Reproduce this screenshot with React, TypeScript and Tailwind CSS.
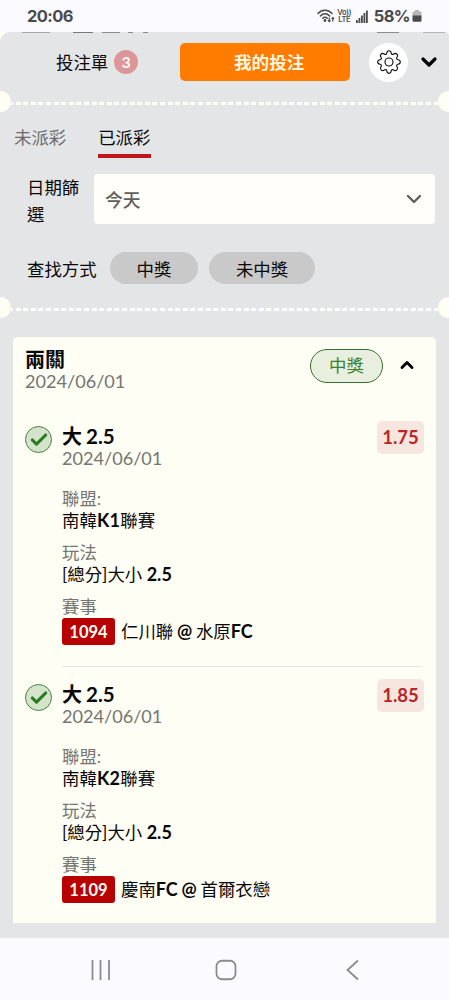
import { Check, ChevronDown, ChevronUp } from 'lucide-react'
import type { ReactNode } from 'react'

interface Leg {
  away: string
  home: string
  league: string
  matchNo: string
  odds: string
}

const legs: Leg[] = [
  { away: '仁川聯', home: '水原FC', league: '南韓K1聯賽', matchNo: '1094', odds: '1.75' },
  { away: '慶南FC', home: '首爾衣戀', league: '南韓K2聯賽', matchNo: '1109', odds: '1.85' },
]

// Latin runs are set bold, Chinese stays at regular weight
function Mixed({ text }: { text: string }) {
  return (
    <>
      {text.split(/([A-Za-z0-9.@]+)/).map((part, i) =>
        i % 2 === 1 ? (
          <span className="text-[18px] font-bold" key={i}>
            {part}
          </span>
        ) : (
          part
        ),
      )}
    </>
  )
}

function StatusBar() {
  return (
    <div className="flex h-8 shrink-0 items-center justify-between bg-[#fbfaff] pl-[27px] pr-[27px] font-['Inter',sans-serif] text-[#4a4a4d]">
      <span className="text-[16.5px] font-bold leading-none tracking-[-0.6px]">20:06</span>
      <div className="flex items-center">
        <svg className="mr-[3px]" fill="none" height="16" viewBox="0 0 18 16" width="18">
          <path d="M1 5.5C5 1.2 11 1.2 15 5.5M3.4 8C6.3 5 9.8 5 12.6 8M5.8 10.3c1.4-1.5 3-1.5 4.4 0" stroke="#4a4a4d" strokeLinecap="round" strokeWidth="1.5" />
          <circle cx="8" cy="12.5" fill="#4a4a4d" r="1.4" />
          <path d="M12.3 9.5v4m-1.3-1.2 1.3 1.3 1.2-1.3M15.8 13.5v-4m-1.2 1.3 1.2-1.3 1.3 1.3" stroke="#4a4a4d" strokeWidth="1.2" />
        </svg>
        <div className="mr-[5px] flex w-[13px] flex-col items-center text-[7.5px] font-semibold leading-[7px] tracking-[-0.3px]">
          <span>Vo))</span>
          <span>LTE</span>
        </div>
        <svg className="mr-[6px]" fill="#4a4a4d" height="13" viewBox="0 0 12 13" width="12">
          <rect height="3" width="1.8" x="0" y="10" />
          <rect height="5" width="1.8" x="2.5" y="8" />
          <rect height="7.5" width="1.8" x="5" y="5.5" />
          <rect height="10" width="1.8" x="7.5" y="3" />
          <rect height="12.5" width="1.8" x="10" y="0.5" />
        </svg>
        <span className="mr-[2px] text-[16.5px] font-bold leading-none tracking-[-0.6px]">58%</span>
        <svg height="14" viewBox="0 0 10 14" width="10">
          <path d="M3 1h4v1.5h1.2A1.3 1.3 0 0 1 9.5 3.8V7H.5V3.8A1.3 1.3 0 0 1 1.8 2.5H3Z" fill="#b5b5b8" />
          <path d="M.5 6.5h9v5A1.3 1.3 0 0 1 8.2 12.8H1.8A1.3 1.3 0 0 1 .5 11.5Z" fill="#4a4a4d" />
        </svg>
      </div>
    </div>
  )
}

function GearIcon() {
  return (
    <svg fill="none" height="26" stroke="#111" strokeLinejoin="round" strokeWidth="1.15" viewBox="0 0 26 26" width="26">
      <path d="M13 1.7 C14.4 1.7 15 2.5 15.2 4 C15.4 5.4 16.6 5.9 17.7 5 C18.9 4.1 19.9 4 20.9 5 C21.9 6 21.9 7.1 21 8.3 C20.1 9.4 20.6 10.6 22 10.8 C23.5 11 24.3 11.6 24.3 13 C24.3 14.4 23.5 15 22 15.2 C20.6 15.4 20.1 16.6 21 17.7 C21.9 18.9 21.9 19.9 20.9 20.9 C19.9 21.9 18.9 21.9 17.7 21 C16.6 20.1 15.4 20.6 15.2 22 C15 23.5 14.4 24.3 13 24.3 C11.6 24.3 11 23.5 10.8 22 C10.6 20.6 9.4 20.1 8.3 21 C7.1 21.9 6.1 21.9 5.1 20.9 C4.1 19.9 4.1 18.9 5 17.7 C5.9 16.6 5.4 15.4 4 15.2 C2.5 15 1.7 14.4 1.7 13 C1.7 11.6 2.5 11 4 10.8 C5.4 10.6 5.9 9.4 5 8.3 C4.1 7.1 4.1 6 5.1 5 C6.1 4 7.1 4.1 8.3 5 C9.4 5.9 10.6 5.4 10.8 4 C11 2.5 11.6 1.7 13 1.7Z" />
      <circle cx="13" cy="13" r="4" />
    </svg>
  )
}

// Ticket style separator: dashes between two half-round notches
function Perforation() {
  return (
    <div className="-mx-[10px] flex h-[21px] shrink-0 items-center">
      <span className="size-[21px] shrink-0 rounded-full bg-[#fffef5]" />
      <span className="mt-[3px] h-[3px] flex-1 bg-[repeating-linear-gradient(90deg,#fffef8_0_2px,transparent_2px_4.6px,#fffef8_4.6px_7.6px)]" />
      <span className="size-[21px] shrink-0 rounded-full bg-[#fffef5]" />
    </div>
  )
}

function Field({ children, label }: { children: ReactNode; label: string }) {
  return (
    <div className="mb-[10px]">
      <p className="h-[22px] leading-[22px] text-[#757571]">{label}</p>
      <div className="flex h-[22px] items-center whitespace-nowrap leading-[22px]">{children}</div>
    </div>
  )
}

function LegRow({ leg }: { leg: Leg }) {
  return (
    <div className="flex h-[258px] shrink-0">
      <span className="mt-[12px] flex size-[27px] shrink-0 items-center justify-center rounded-full border-[1.5px] border-[#467f42] bg-[#d3e4cb]">
        <Check className="text-[#2c7a23]" size={20} strokeWidth={3.8} />
      </span>
      <div className="ml-[10px] min-w-0 flex-1">
        <div className="flex justify-between">
          <div className="pt-[11px]">
            <p className="h-[22px] text-[20px] font-bold leading-[23px]">
              大<span className="ml-[4px] text-[20.5px]">2.5</span>
            </p>
            <p className="h-[22px] text-[18.1px] leading-[22px] text-[#757571]">2024/06/01</p>
          </div>
          <span className="mr-[-2px] mt-[7px] flex h-[33px] w-[47px] items-center justify-center rounded-[5px] bg-[#f7e5df] pt-px text-[18.5px] font-bold text-[#b9262a]">
            {leg.odds}
          </span>
        </div>
        <div className="pt-[19px]">
          <Field label="聯盟:">
            <span className="-mt-[2px] tracking-[0.15px]">
              <Mixed text={leg.league} />
            </span>
          </Field>
          <Field label="玩法">
            <span className="-mt-[2px] whitespace-pre">
              <Mixed text="[總分]大小 2.5" />
            </span>
          </Field>
          <Field label="賽事">
            <span className="mr-[6px] mt-[5px] flex h-[27px] w-[53px] shrink-0 items-center justify-center rounded-[3px] bg-[#b80000] text-[16.5px] font-bold text-[#fffef3]">
              {leg.matchNo}
            </span>
            <span className="mt-[5px] whitespace-pre [word-spacing:-0.7px]">
              <Mixed text={`${leg.away} @ ${leg.home}`} />
            </span>
          </Field>
        </div>
      </div>
    </div>
  )
}

export default function App() {
  return (
    <div className="flex h-[1000px] w-[449px] flex-col overflow-hidden bg-[#fffef5] font-['Lato','Noto_Sans_CJK_TC',sans-serif] text-[17.4px] text-[#080808]">
      <StatusBar />

      <main className="flex h-[906px] shrink-0 flex-col overflow-hidden rounded-tl-[10px] rounded-tr-[4px] bg-[#e4e5e7]">
        {/* Edge of the page behind the bet slip */}
        <div className="flex h-px shrink-0 pl-[22px]">
          <span className="h-px w-[28px] bg-[#a5a6a8]" />
          <span className="ml-[23px] h-px w-[20px] bg-[#77787a]" />
          <span className="ml-[9px] h-px w-[18px] bg-[#8b8c8e]" />
          <span className="ml-[8px] h-px w-[5px] bg-[#8b8c8e]" />
          <span className="ml-[10px] h-px w-[5px] bg-[#8b8c8e]" />
          <span className="ml-[229px] h-px w-[22px] bg-[#8b8c8e]" />
          <span className="ml-[24px] h-px w-[22px] bg-[#b5b6b8]" />
        </div>

        {/* Header */}
        <header className="flex h-[58px] shrink-0 items-center pl-[56px]">
          <span className="mt-[2px]">投注單</span>
          <span className="ml-[6px] flex size-[24px] items-center justify-center rounded-full bg-[#dc9598] text-[16px] font-bold text-[#fff8f2]">
            3
          </span>
          <button className="ml-[42px] h-[38px] w-[170px] rounded-[5px] bg-[#ff7c00] pl-[8px] pt-[2px] text-[17.6px] font-bold text-[#fff6e0]">
            我的投注
          </button>
          <button aria-label="設定" className="ml-[19px] flex size-[39px] items-center justify-center rounded-full bg-white">
            <GearIcon />
          </button>
          <ChevronDown className="ml-[9px] text-black" size={24} strokeWidth={3.2} />
        </header>

        <Perforation />

        {/* Tabs */}
        <nav className="flex h-[46px] shrink-0 gap-[32px] pl-[14px]">
          <span className="h-[46px] pt-[13px] leading-[26px] text-[#6b6b6d]">未派彩</span>
          <span className="h-[46px] w-[53px] border-b-[4px] border-[#bf151b] pt-[13px] leading-[26px]">已派彩</span>
        </nav>

        {/* Filters */}
        <div className="mt-[16px] flex h-[50px] shrink-0 items-center pl-[27px] pr-[14px]">
          <span className="mt-[3px] w-[67px] shrink-0 pr-[14px] leading-[27px]">日期篩選</span>
          <div className="flex h-[50px] flex-1 items-center justify-between rounded-[4px] bg-[#fffef8] pl-[11px] pr-[9px] font-medium text-[#5f5f5c]">
            <span className="mt-[3px] text-[17.8px]">今天</span>
            <ChevronDown size={24} strokeWidth={2.4} />
          </div>
        </div>
        <div className="mt-[28px] flex h-[32px] shrink-0 items-center pl-[27px]">
          <span className="mt-[4px] w-[83px]">查找方式</span>
          <span className="flex h-[32px] w-[88px] items-center justify-center rounded-full bg-[#c9c9c9] pt-[4px]">中獎</span>
          <span className="ml-[11px] flex h-[32px] w-[106px] items-center justify-center rounded-full bg-[#c9c9c9] pt-[4px]">
            未中獎
          </span>
        </div>

        <div className="mt-[13px] flex shrink-0 flex-col">
          <Perforation />
        </div>

        {/* Settled ticket */}
        <section className="ml-[13px] mr-[13px] mt-[19px] flex h-[586px] shrink-0 flex-col overflow-hidden rounded-t-[5px] bg-[#fffef5] pl-[12px] pr-[14px]">
          <div className="flex h-[77px] shrink-0 pt-[11px]">
            <div className="flex-1">
              <p className="h-[22px] text-[20px] font-bold leading-[22px]">兩關</p>
              <p className="h-[22px] text-[18.1px] leading-[22px] text-[#757571]">2024/06/01</p>
            </div>
            <span className="mt-px flex h-[34px] w-[73px] items-center justify-center rounded-full border-[1.5px] border-[#39702f] bg-[#e9efdf] text-[#39802f]">
              中獎
            </span>
            <ChevronUp className="ml-[14px] mr-[5px] mt-[7px] text-black" size={20} strokeWidth={3.4} />
          </div>
          <LegRow leg={legs[0]!} />
          <div className="ml-[37px] mt-[-6px] h-px shrink-0 bg-[#e6e4df]" />
          <div className="mt-[5px]">
            <LegRow leg={legs[1]!} />
          </div>
        </section>
      </main>

      {/* Android navigation */}
      <footer className="flex h-[62px] shrink-0 items-center bg-[#fbfaff] pl-[90px] pt-px">
        <svg fill="none" height="22" stroke="#8b8a8f" strokeWidth="1.8" viewBox="0 0 22 22" width="22">
          <path d="M2.5 1v20M10.500 1v20M19 1v20" />
        </svg>
        <svg className="ml-[103px]" fill="none" height="22" stroke="#8b8a8f" strokeWidth="1.8" viewBox="0 0 22 22" width="22">
          <rect height="18.5" rx="5.5" width="19" x="1.5" y="1.75" />
        </svg>
        <svg className="ml-[108px]" fill="none" height="22" stroke="#8b8a8f" strokeWidth="1.8" viewBox="0 0 14 22" width="14">
          <path d="M13 1.5 2.5 11l10.500 9.5" />
        </svg>
      </footer>
    </div>
  )
}
